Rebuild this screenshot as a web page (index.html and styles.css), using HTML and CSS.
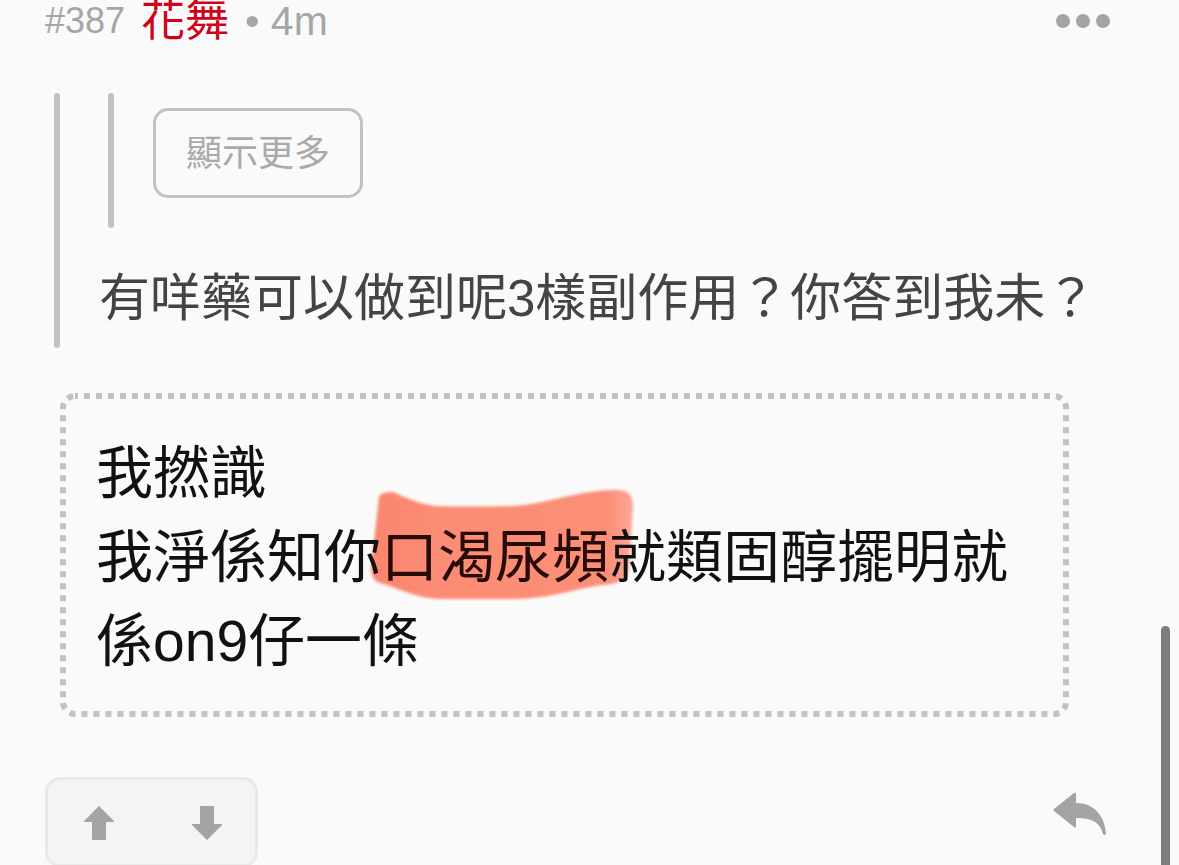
FILE: index.html
```html
<!DOCTYPE html>
<html lang="zh-Hant">

<head>
  <meta charset="UTF-8">
  <meta name="viewport" content="width=device-width, initial-scale=1.0">
  <title>#387</title>
  <link rel="stylesheet" href="styles.css">
</head>

<body>
  <article class="post">
    <header class="post-header">
      <span class="post-number">#387</span>
      <a href="#" class="post-author">花舞</a>
      <span class="post-time">• 4m</span>
      <button type="button" class="icon-btn more-btn" aria-label="更多">
        <svg width="54" height="14" viewBox="0 0 54 14">
          <circle cx="7" cy="7" r="7" />
          <circle cx="27" cy="7" r="7" />
          <circle cx="47" cy="7" r="7" />
        </svg>
      </button>
    </header>

    <blockquote class="quote">
      <blockquote class="quote quote-inner">
        <button type="button" class="show-more">顯示更多</button>
      </blockquote>
      <p class="quote-text">有咩藥可以做到呢3樣副作用？你答到我未？</p>
    </blockquote>

    <div class="reply-box">
      <svg class="reply-border" aria-hidden="true">
        <rect class="reply-border-line" x="3" y="3" rx="12" />
      </svg>
      <p class="reply-text">我撚識<br>我淨係知你<mark class="marker">口渴尿頻<svg class="marker-ink" width="280" height="130" viewBox="0 0 280 130" aria-hidden="true">
        <defs>
          <linearGradient id="ink" x1="0" x2="1">
            <stop offset="0" stop-color="#fc846c" />
            <stop offset="0.25" stop-color="#fb8c74" />
            <stop offset="0.9" stop-color="#fb8e76" />
            <stop offset="1" stop-color="#fca796" />
          </linearGradient>
          <filter id="soft">
            <feGaussianBlur stdDeviation="1.5" />
          </filter>
        </defs>
        <path fill="url(#ink)" filter="url(#soft)" d="M16 17 Q17 12 30 12 Q55 24 72 26 Q100 27 150 26 C185 24 215 10 254 10 Q270 10 270 25 L266 88 Q263 102 248 104 C215 107 190 119 150 119 L78 119 C55 119 35 108 17 103 Q8 100 8 88 Z" />
      </svg></mark>就類固醇擺明就係on9仔一條</p>
    </div>

    <footer class="post-footer">
      <div class="votes">
        <button type="button" class="icon-btn" aria-label="正評">
          <svg width="30" height="34" viewBox="0 0 30 34">
            <path d="M15 0 L30 15 V16 H22 V33 Q22 34 21 34 H9 Q8 34 8 33 V16 H0 V15 Z" />
          </svg>
        </button>
        <button type="button" class="icon-btn" aria-label="負評">
          <svg width="30" height="34" viewBox="0 0 30 34">
            <path d="M15 34 L30 19 V18 H22 V1 Q22 0 21 0 H9 Q8 0 8 1 V18 H0 V19 Z" />
          </svg>
        </button>
      </div>
      <button type="button" class="icon-btn reply-btn" aria-label="回覆">
        <svg width="54" height="44" viewBox="0 0 54 44">
          <path d="M21 1 Q23 0 23 2 V11 C41 11 52 24 53 42 Q52 44 50 42 C47 30 39 26 23 26 V34 Q23 37 21 35 L1 19 Q0 18 1 17 Z" />
        </svg>
      </button>
    </footer>
  </article>
  <div class="scroll-thumb"></div>
</body>

</html>
```

FILE: styles.css
```css
* {
  margin: 0;
  padding: 0;
  box-sizing: border-box;
}

html {
  overflow: hidden;
}

body {
  font-family: "Liberation Sans", "Noto Sans CJK TC", sans-serif;
  background: #fafafa;
  color: #111111;
}

.post {
  padding: 0 69px 0 45px;
}

.icon-btn {
  display: flex;
  background: none;
  border: none;
  cursor: pointer;
}

.icon-btn > svg {
  fill: #a5a3a4;
}

.post-header {
  display: flex;
  align-items: center;
  gap: 16px;
  height: 42px;
  margin-bottom: 51px;
  line-height: 44px;
  color: #a6a6a6;
}

.post-number {
  font-size: 36px;
}

.post-author {
  font-size: 44px;
  color: #d0021b;
  text-decoration: none;
}

.post-time {
  font-size: 41px;
}

.more-btn {
  margin-left: auto;
}

.quote {
  position: relative;
  margin-left: 9px;
  padding-left: 45px;
}

.quote::before {
  content: "";
  position: absolute;
  left: 0;
  top: 0;
  bottom: 0;
  width: 6px;
  border-radius: 3px;
  background: #bdc3c7;
}

.quote-inner {
  padding: 15px 0 30px 45px;
}

.show-more {
  display: block;
  height: 90px;
  padding: 0 30px 6px;
  border: 3px solid #bdc3c7;
  border-radius: 15px;
  background: none;
  color: #aaaaaa;
  font-family: inherit;
  font-size: 36px;
  cursor: pointer;
}

.quote-text {
  padding: 33px 0 12px;
  font-size: 51px;
  line-height: 75px;
  color: #444444;
  white-space: nowrap;
}

.reply-box {
  position: relative;
  z-index: 0;
  margin: 45px 41px 60px 15px;
  padding: 38px 36px 34px;
}

.reply-border {
  position: absolute;
  left: 0;
  top: 0;
  width: 100%;
  height: 100%;
}

.reply-border-line {
  width: calc(100% - 6px);
  height: calc(100% - 6px);
  fill: none;
  stroke: #bdc3c7;
  stroke-width: 6px;
  stroke-dasharray: 6 6;
  stroke-dashoffset: 3px;
}

.reply-text {
  font-size: 57px;
  line-height: 84px;
}

.marker {
  position: relative;
  background: none;
  color: #280b06;
}

.marker-ink {
  position: absolute;
  left: -18px;
  top: -45px;
  z-index: -1;
}

.post-footer {
  display: flex;
  justify-content: space-between;
  align-items: flex-start;
}

.votes {
  display: flex;
  justify-content: space-between;
  align-items: center;
  width: 213px;
  height: 90px;
  padding: 2px 33px 0 36px;
  border: 3px solid #e9e9e9;
  border-radius: 15px;
  background: #f4f4f4;
}

.reply-btn {
  margin: 15px 3px 0 0;
}

/* scroll position indicator */
.scroll-thumb {
  position: fixed;
  top: 626px;
  right: 9px;
  bottom: 0;
  width: 9px;
  border-radius: 5px 5px 0 0;
  background: #7d7d7d;
}
```
